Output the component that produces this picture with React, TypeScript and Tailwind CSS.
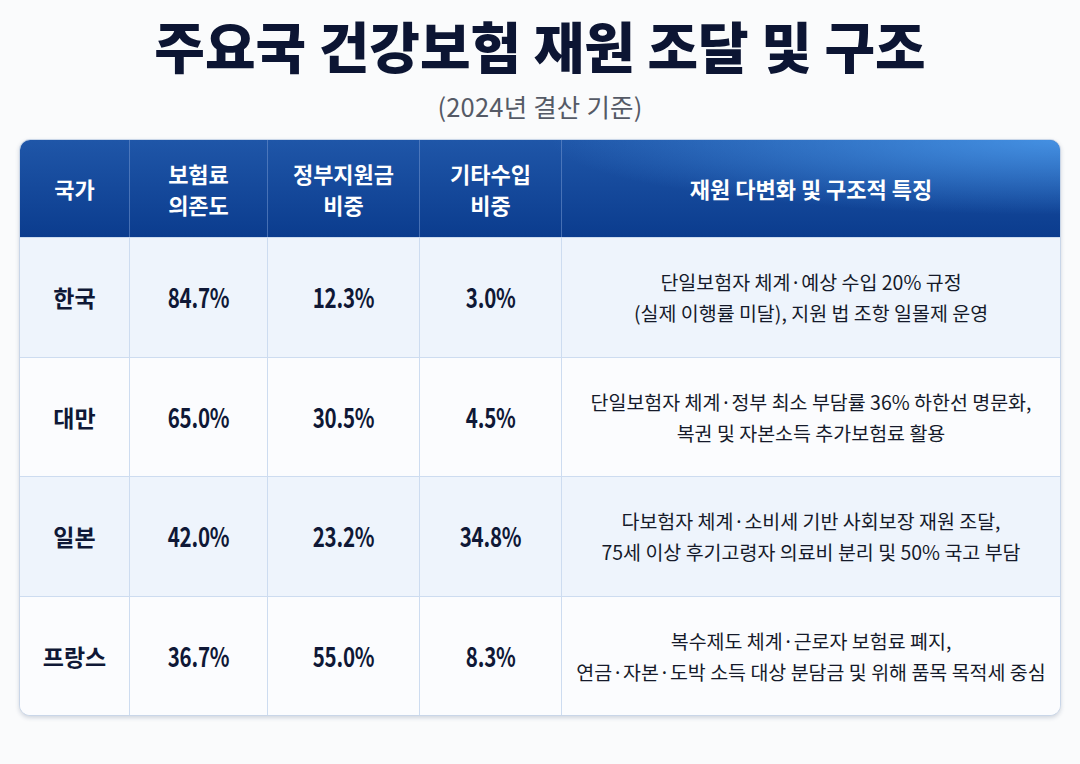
import React from "react";

const rows = [
  {
    c: "한국",
    a: "84.7%",
    b: "12.3%",
    d: "3.0%",
    t: ["단일보험자 체계·예상 수입 20% 규정", "(실제 이행률 미달), 지원 법 조항 일몰제 운영"],
  },
  {
    c: "대만",
    a: "65.0%",
    b: "30.5%",
    d: "4.5%",
    t: ["단일보험자 체계·정부 최소 부담률 36% 하한선 명문화,", "복권 및 자본소득 추가보험료 활용"],
  },
  {
    c: "일본",
    a: "42.0%",
    b: "23.2%",
    d: "34.8%",
    t: ["다보험자 체계·소비세 기반 사회보장 재원 조달,", "75세 이상 후기고령자 의료비 분리 및 50% 국고 부담"],
  },
  {
    c: "프랑스",
    a: "36.7%",
    b: "55.0%",
    d: "8.3%",
    t: ["복수제도 체계·근로자 보험료 폐지,", "연금·자본·도박 소득 대상 분담금 및 위해 품목 목적세 중심"],
  },
];

const grid = "grid grid-cols-[110px_138px_152px_142px_1fr]";

function Num({ v }: { v: string }) {
  return (
    <div className="flex items-center justify-center border-r border-[#cddcf0]">
      <span className="inline-block text-[27px] font-bold scale-x-[0.76] tracking-[-0.3px]">{v}</span>
    </div>
  );
}

export default function App() {
  return (
    <div
      className="w-[1080px] h-[764px] bg-[#fafbfc] text-[#0f1836] flex flex-col items-center"
      style={{ fontFamily: '"Noto Sans CJK KR", "Noto Sans", sans-serif' }}
    >
      <h1 className="mt-[11px] text-[55px] leading-[66px] font-black tracking-[0px] text-[#0c1533]">
        주요국 건강보험 재원 조달 및 구조
      </h1>
      <div className="mt-[13px] text-[25.5px] leading-[32px] text-[#555a66] tracking-[0.2px]">(2024년 결산 기준)</div>

      <div className="mt-[17px] w-[1042px] rounded-[11px] border border-[#c9d6e8] overflow-hidden shadow-[0_2px_4px_rgba(30,50,90,0.18)] bg-white">
        <div
          className={`${grid} h-[97px] text-white font-bold text-[22px] leading-[31px] bg-[radial-gradient(ellipse_70%_110%_at_100%_0%,rgba(72,150,232,0.9),rgba(72,150,232,0)_70%),linear-gradient(180deg,#1f56a8_0%,#0b3c8e_100%)]`}
        >
          <div className="flex items-center justify-center border-r border-[#6b8fcc]/60">국가</div>
          <div className="flex flex-col items-center justify-center border-r border-[#6b8fcc]/60 text-center">
            <span>보험료</span>
            <span>의존도</span>
          </div>
          <div className="flex flex-col items-center justify-center border-r border-[#6b8fcc]/60 text-center">
            <span>정부지원금</span>
            <span>비중</span>
          </div>
          <div className="flex flex-col items-center justify-center border-r border-[#6b8fcc]/60 text-center">
            <span>기타수입</span>
            <span>비중</span>
          </div>
          <div className="flex items-center justify-center">재원 다변화 및 구조적 특징</div>
        </div>

        {rows.map((r, i) => (
          <div
            key={r.c}
            className={`${grid} h-[119.5px] border-t border-[#cddcf0] ${i % 2 === 0 ? "bg-[#eef4fc]" : "bg-[#fbfcfe]"}`}
          >
            <div className="flex items-center justify-center border-r border-[#cddcf0] text-[23px] font-bold">{r.c}</div>
            <Num v={r.a} />
            <Num v={r.b} />
            <Num v={r.d} />
            <div className="flex flex-col items-center justify-center text-[19.5px] leading-[31px] text-[#151a2a] text-center">
              <span>{r.t[0]}</span>
              <span>{r.t[1]}</span>
            </div>
          </div>
        ))}
      </div>
    </div>
  );
}
